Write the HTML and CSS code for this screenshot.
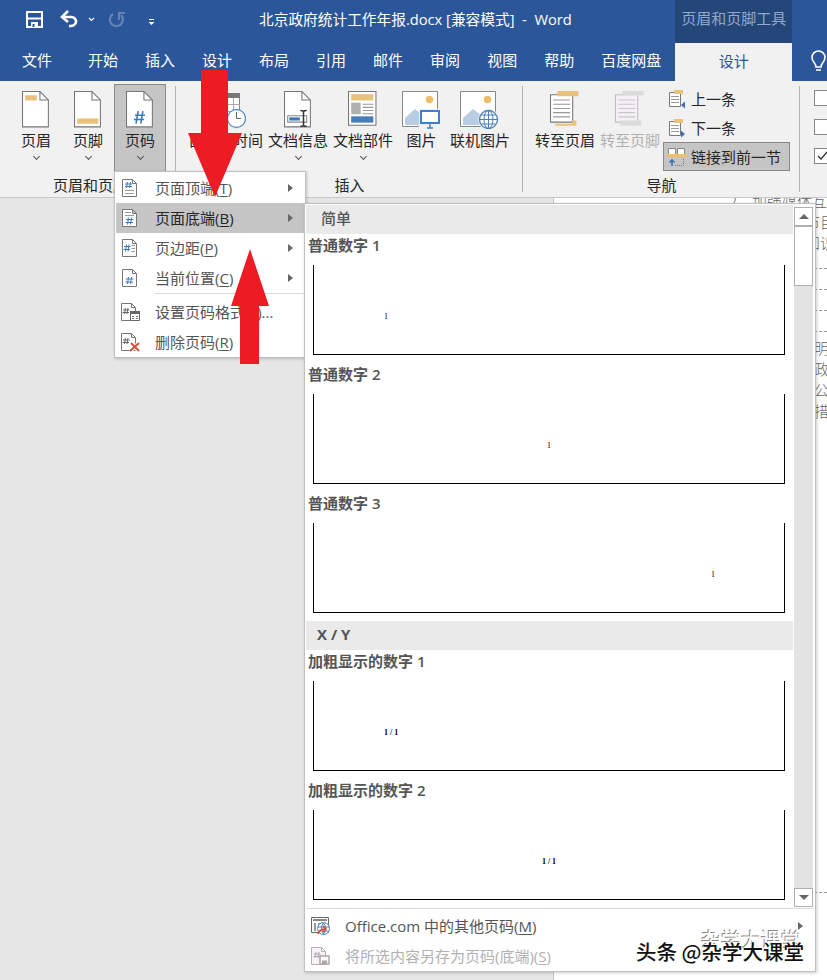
FILE: index.html
```html
<!DOCTYPE html>
<html lang="zh-CN">

<head>
    <meta charset="UTF-8">
    <meta name="viewport" content="width=device-width, initial-scale=1.0">
    <title>北京政府统计工作年报.docx [兼容模式] - Word</title>
    <link rel="stylesheet" href="styles.css">
</head>

<body>
    <header class="top">
        <div class="top-main">
            <div class="titlebar">
                <svg class="quick" width="145" height="24" viewBox="0 0 145 24">
                    <path d="M1 4h15v15H1z" fill="none" stroke="#fff" stroke-width="2" />
                    <path d="M2 10.5h13" stroke="#fff" stroke-width="2" />
                    <path d="M5 14h7v6H5z" fill="#fff" />
                    <path d="M6.500 16h2v3h-2z" fill="#2b579a" />
                    <path d="M36 9h9c7 0 7 10-2 9" fill="none" stroke="#fff" stroke-width="2.600" />
                    <path d="M42 3l-6 6 6 5" fill="none" stroke="#fff" stroke-width="2.600" />
                    <path d="M63 10l2.500 2.500L68 10" fill="none" stroke="#fff" stroke-width="1.200" />
                    <path d="M87 6a6.500 6.500 0 1 0 8 1" fill="none" stroke="#6283b6" stroke-width="2.300" />
                    <path d="M93 12V5h6" fill="none" stroke="#6283b6" stroke-width="2" />
                    <path d="M123 11.500h5" stroke="#fff" />
                    <path d="M122.500 14h6l-3 3z" fill="#fff" />
                </svg>
                <div class="doc-title">北京政府统计工作年报.docx [兼容模式]&nbsp; -&nbsp; Word</div>
            </div>
            <nav class="tabs">
                <span class="file">文件</span>
                <span>开始</span>
                <span>插入</span>
                <span>设计</span>
                <span>布局</span>
                <span>引用</span>
                <span>邮件</span>
                <span>审阅</span>
                <span>视图</span>
                <span>帮助</span>
                <span>百度网盘</span>
            </nav>
        </div>
        <div class="context">
            <div class="context-name">页眉和页脚工具</div>
            <div class="context-tab">设计</div>
        </div>
        <svg class="bulb" width="16" height="24" viewBox="0 0 16 24">
            <path d="M5 17c0-4-4-5-4-9.500a6.500 6.500 0 0 1 13 0C14 12 10 13 10 17zM5 20h5" fill="none" stroke="#fff" stroke-width="1.600" />
        </svg>
    </header>

    <section class="ribbon">
        <div class="group g-header">
            <div class="buttons">
                <div class="btn">
                    <svg width="26" height="36" viewBox="0 0 26 36">
                        <path d="M.5.500h16.500l8 8v25.500H.5z" fill="#fff" stroke="#777" />
                        <path d="M17 .5v8h8" fill="none" stroke="#777" />
                        <path d="M3 4h11v5H3z" fill="#e8c27a" />
                    </svg>
                    <span>页眉</span>
                    <i class="chev"></i>
                </div>
                <div class="btn">
                    <svg width="26" height="36" viewBox="0 0 26 36">
                        <path d="M.5.500h16.500l8 8v25.500H.5z" fill="#fff" stroke="#777" />
                        <path d="M17 .5v8h8" fill="none" stroke="#777" />
                        <path d="M3 26h20v5H3z" fill="#e8c27a" />
                    </svg>
                    <span>页脚</span>
                    <i class="chev"></i>
                </div>
                <div class="btn pressed">
                    <svg width="26" height="36" viewBox="0 0 26 36">
                        <path d="M.5.500h16.500l8 8v25.500H.5z" fill="#fff" stroke="#777" />
                        <path d="M17 .5v8h8" fill="none" stroke="#777" />
                        <path d="M11.500 19L9.500 31M16 19l-2 12M8.500 23h9.500M7.500 27h9.500" fill="none" stroke="#3f78b8" stroke-width="1.500" />
                    </svg>
                    <span>页码</span>
                    <i class="chev"></i>
                </div>
            </div>
            <div class="group-name">页眉和页脚</div>
        </div>

        <div class="group g-insert">
            <div class="buttons">
                <div class="btn w-date">
                    <svg width="40" height="38" viewBox="0 0 40 38">
                        <path d="M3.500 2.500h30v29h-30z" fill="#fff" stroke="#888" />
                        <path d="M3 2h31v5H3z" fill="#777" />
                        <path d="M3 13.500h31M3 20.500h31M10.500 7v24M18.500 7v24M27.500 7v24" stroke="#aaa" />
                        <circle cx="30.500" cy="27.500" r="9" fill="#fff" stroke="#5b8fc9" stroke-width="1.300" />
                        <path d="M30.500 21v6.500h4.500" fill="none" stroke="#666" />
                    </svg>
                    <span>日期和时间</span>
                </div>
                <div class="btn w-four">
                    <svg width="26" height="36" viewBox="0 0 26 36">
                        <path d="M.5.500h16.500l8 8v25.500H.5z" fill="#fff" stroke="#777" />
                        <path d="M17 .5v8h8" fill="none" stroke="#777" />
                        <path d="M3.500 23.500h18v6h-18z" fill="#fff" stroke="#888" />
                        <path d="M5 25h10v3H5z" fill="#3f78b8" />
                        <path d="M18.500 19v14M15.500 18.500q3 0 3 1.500q0-1.500 3-1.500M15.500 33.500q3 0 3-1.500q0 1.500 3 1.500" fill="none" stroke="#333" stroke-width="1.400" />
                    </svg>
                    <span>文档信息</span>
                    <i class="chev"></i>
                </div>
                <div class="btn w-four">
                    <svg width="28" height="36" viewBox="0 0 28 36">
                        <path d="M.5.500h26v32H.5z" fill="#fff" stroke="#777" />
                        <path d="M3 3h21v6H3z" fill="#e8c27a" />
                        <path d="M3 11h9v11H3z" fill="#b0b0b0" />
                        <path d="M14 12.500h10M14 15.500h10M14 18.500h10M14 21.500h10" stroke="#999" />
                        <path d="M3 24h21v6H3z" fill="#4a7ebb" />
                    </svg>
                    <span>文档部件</span>
                    <i class="chev"></i>
                </div>
                <div class="btn w-pic">
                    <svg width="40" height="38" viewBox="0 0 40 38">
                        <path d="M.5.500h35v35H.5z" fill="#fff" stroke="#888" />
                        <path d="M3 34V27l10-9 12 9v7z" fill="#b9cde2" />
                        <circle cx="27.500" cy="8.500" r="3.700" fill="#efbd68" />
                        <path d="M17 18h22v20H17z" fill="#f1f1f1" />
                        <path d="M19 20h18v12H19z" fill="#fff" stroke="#3d80cb" stroke-width="2" />
                        <path d="M28 33v4M25 37h6" stroke="#3d80cb" stroke-width="1.500" />
                    </svg>
                    <span>图片</span>
                </div>
                <div class="btn w-four">
                    <svg width="40" height="38" viewBox="0 0 40 38">
                        <path d="M.5.500h35v35H.5z" fill="#fff" stroke="#888" />
                        <path d="M3 34V27l10-9 12 9v7z" fill="#b9cde2" />
                        <circle cx="27.500" cy="8.500" r="3.700" fill="#efbd68" />
                        <circle cx="28.500" cy="28.500" r="10.500" fill="#f1f1f1" />
                        <circle cx="28.500" cy="28.500" r="9" fill="#fff" stroke="#4c7fb8" stroke-width="1.300" />
                        <ellipse cx="28.500" cy="28.500" rx="4.500" ry="9" fill="none" stroke="#4c7fb8" />
                        <path d="M28.500 19.500v18M19.500 28.500h18M21 24h15M21 33h15" stroke="#4c7fb8" />
                    </svg>
                    <span>联机图片</span>
                </div>
            </div>
            <div class="group-name">插入</div>
        </div>

        <div class="group g-nav">
            <div class="buttons">
                <div class="btn w-four">
                    <svg width="28" height="36" viewBox="0 0 28 36">
                        <path d="M.5 3.500h21v26H.5z" fill="#fff" stroke="#777" />
                        <path d="M3 8.500h16M3 12.500h16M3 16.500h16M3 20.500h16M3 24.500h16" stroke="#999" />
                        <path d="M7 0h20v5H7zM5 31h16v-3h4v5H5z" fill="#e8c27a" />
                    </svg>
                    <span>转至页眉</span>
                </div>
                <div class="btn w-four disabled">
                    <svg width="28" height="36" viewBox="0 0 28 36">
                        <path d="M.5 3.500h21v26H.5z" fill="#f4f0f4" stroke="#c0bcc0" />
                        <path d="M3 8.500h16M3 12.500h16M3 16.500h16M3 20.500h16M3 24.500h16" stroke="#cac6ca" />
                        <path d="M7 0h20v4H7zM5 28h20v5H5z" fill="#dcdadc" />
                    </svg>
                    <span>转至页脚</span>
                </div>
                <div class="stack">
                    <div class="row">
                        <svg width="20" height="20" viewBox="0 0 20 20">
                            <path d="M2.500 3.500h11v14h-11z" fill="#fff" stroke="#777" />
                            <path d="M4 7.500h8M4 10.500h8M4 13.500h8" stroke="#999" />
                            <path d="M7 1h9v4H7z" fill="#e8c27a" />
                            <path d="M14 16l4-3.500v7z" fill="#3d73b5" />
                        </svg>
                        上一条
                    </div>
                    <div class="row">
                        <svg width="20" height="20" viewBox="0 0 20 20">
                            <path d="M2.500 3.500h11v14h-11z" fill="#fff" stroke="#777" />
                            <path d="M4 7.500h8M4 10.500h8M4 13.500h8" stroke="#999" />
                            <path d="M7 1h9v4H7z" fill="#e8c27a" />
                            <path d="M18 16l-4-3.500v7z" fill="#3d73b5" />
                        </svg>
                        下一条
                    </div>
                    <div class="row linked">
                        <svg width="20" height="20" viewBox="0 0 20 20">
                            <path d="M1.500 1.500h7v7h-7zM10.500 1.500h7v7h-7z" fill="#fff" stroke="#888" />
                            <path d="M0 7h20v4H0z" fill="#e8c27a" />
                            <path d="M5 19v-6M2.500 15.500L5 13l2.500 2.500" fill="none" stroke="#3d73b5" stroke-width="1.600" />
                            <path d="M8 18.500h8.500V12" fill="none" stroke="#777" stroke-dasharray="1 1" />
                        </svg>
                        链接到前一节
                    </div>
                </div>
            </div>
            <div class="group-name">导航</div>
        </div>

        <div class="checks">
            <span class="check"></span>
            <span class="check"></span>
            <span class="check">
                <svg width="14" height="14" viewBox="0 0 14 14">
                    <path d="M3 7l3 3 6-7" fill="none" stroke="#333" stroke-width="1.300" />
                </svg>
            </span>
        </div>
    </section>

    <main class="workspace">
        <div class="paper">
            <p class="line l1">2、加强媒体互动</p>
            <p class="line l2">节目</p>
            <p class="line l2">知识</p>
            <p class="dash"></p>
            <p class="dash"></p>
            <p class="dash"></p>
            <p class="dash"></p>
            <p class="line l3">明</p>
            <p class="line l3">政</p>
            <p class="line l3">公</p>
            <p class="line l3">措</p>
            <p class="dash last"></p>
        </div>
    </main>

    <ul class="menu">
        <li>
            <svg width="16" height="20" viewBox="0 0 16 20">
                <path d="M.5 1.500h10l4 4v13H.5zM10.500 1.500v4h4" fill="#fff" stroke="#777" />
                <path d="M5.500 4L4.500 10M8.500 4l-1 6M3 6h7M3 8.500h7" fill="none" stroke="#3f78b8" />
                <path d="M3 12.500h9M3 15.500h9" stroke="#999" />
            </svg>
            <span>页面顶端(<u>T</u>)</span><i class="arrow"></i>
        </li>
        <li class="active">
            <svg width="16" height="20" viewBox="0 0 16 20">
                <path d="M.5 1.500h10l4 4v13H.5zM10.500 1.500v4h4" fill="#fff" stroke="#777" />
                <path d="M3 4.500h6M3 7.500h9" stroke="#999" />
                <path d="M6.500 9.500l-1 7M9.500 9.500l-1 7M4 11.500h7.500M3.500 14.500H11" fill="none" stroke="#3f78b8" />
            </svg>
            <span>页面底端(<u>B</u>)</span><i class="arrow"></i>
        </li>
        <li>
            <svg width="16" height="20" viewBox="0 0 16 20">
                <path d="M.5 1.500h10l4 4v13H.5zM10.500 1.500v4h4" fill="#fff" stroke="#777" />
                <path d="M4.500 6.500l-1 7M7 6.500l-1 7M2 8.500h6.500M1.500 11.500H8" fill="none" stroke="#3f78b8" />
                <path d="M9.500 7.500H13M9.500 10.500H13M9.500 13.500H13" stroke="#999" />
            </svg>
            <span>页边距(<u>P</u>)</span><i class="arrow"></i>
        </li>
        <li>
            <svg width="16" height="20" viewBox="0 0 16 20">
                <path d="M.5 1.500h10l4 4v13H.5zM10.500 1.500v4h4" fill="#fff" stroke="#777" />
                <path d="M6.500 9l-1 7M9.500 9l-1 7M4 11h7.500M3.500 14H11" fill="none" stroke="#3f78b8" />
            </svg>
            <span>当前位置(<u>C</u>)</span><i class="arrow"></i>
        </li>
        <li class="sep"></li>
        <li class="wide">
            <svg width="20" height="20" viewBox="0 0 20 20">
                <path d="M.5 1.500h10l4 4v13H.5zM10.500 1.500v4h4" fill="#fff" stroke="#777" />
                <path d="M4.500 6l-1 6M7 6l-1 6M2 8h6.500M1.500 10.500H8" fill="none" stroke="#666" />
                <path d="M9.500 9.500h9v9h-9z" fill="#fff" stroke="#666" />
                <path d="M9 9h10v3H9z" fill="#666" />
                <path d="M11 14.500h2M15 14.500h2M11 16.500h2M15 16.500h2" stroke="#777" />
            </svg>
            <span>设置页码格式(<u>F</u>)...</span>
        </li>
        <li class="wide">
            <svg width="20" height="20" viewBox="0 0 20 20">
                <path d="M.5 1.500h10l4 4v13H.5zM10.500 1.500v4h4" fill="#fff" stroke="#777" />
                <path d="M4.500 6l-1 6M7 6l-1 6M2 8h6.500M1.500 10.500H8" fill="none" stroke="#666" />
                <path d="M10 11l8 8M18 11l-9 8" stroke="#fff" stroke-width="4" />
                <path d="M10 11l8 8M18 11l-9 8" stroke="#d6513f" stroke-width="2" />
            </svg>
            <span>删除页码(<u>R</u>)</span>
        </li>
    </ul>

    <div class="gallery">
        <div class="gallery-body">
            <div class="list">
                <div class="band">简单</div>
                <div class="item">
                    <h4>普通数字 1</h4>
                    <div class="preview left">1</div>
                </div>
                <div class="item">
                    <h4>普通数字 2</h4>
                    <div class="preview">1</div>
                </div>
                <div class="item">
                    <h4>普通数字 3</h4>
                    <div class="preview right">1</div>
                </div>
                <div class="band xy">X / Y</div>
                <div class="item">
                    <h4>加粗显示的数字 1</h4>
                    <div class="preview left bold">1 / 1</div>
                </div>
                <div class="item">
                    <h4>加粗显示的数字 2</h4>
                    <div class="preview bold">1 / 1</div>
                </div>
            </div>
            <div class="scroll">
                <div class="sb up"></div>
                <div class="thumb"></div>
                <div class="sb down"></div>
            </div>
        </div>
        <div class="gallery-foot">
            <div class="foot-row">
                <svg width="20" height="20" viewBox="0 0 20 20">
                    <path d="M.5 1.500h17v15H.5z" fill="#fff" stroke="#666" />
                    <path d="M2 4h14" stroke="#888" stroke-width="2" />
                    <path d="M3 7h2v8H3zM7 7h3v2H7z" fill="#999" />
                    <circle cx="12.500" cy="12.500" r="6" fill="#fff" stroke="#4c7fb8" />
                    <path d="M7 11h11M7.500 15h10M12.500 7q-4 5 0 11q4-6 0-11" fill="none" stroke="#4c7fb8" />
                    <path d="M7 18c1-4 4-5 7-5M12 10l3 3-3 3" fill="none" stroke="#e04a32" stroke-width="1.700" />
                </svg>
                <span>Office.com 中的其他页码(<u>M</u>)</span>
                <i class="arrow"></i>
            </div>
            <div class="foot-row off">
                <svg width="20" height="20" viewBox="0 0 20 20">
                    <path d="M.5 1.500h10l4 4v13H.5zM10.500 1.500v4h4" fill="#f6f3f6" stroke="#b5b0b5" />
                    <path d="M5 6L4 12M8 6l-1 6M3 8h6.500M2.500 10.500H9" fill="none" stroke="#b0abb0" />
                    <path d="M9 10h9v8H9z" fill="#fff" stroke="#a9a5a9" stroke-width="1.500" />
                    <path d="M11 14.500h5V18h-5z" fill="#a9a5a9" />
                </svg>
                <span>将所选内容另存为页码(底端)(<u>S</u>)</span>
            </div>
        </div>
    </div>

    <svg class="pointer down-arrow" width="54" height="127" viewBox="0 0 54 127">
        <path d="M13 0h27v63h14L27 127 0 63h13z" fill="#ed1c24" />
    </svg>
    <svg class="pointer up-arrow" width="38" height="115" viewBox="0 0 38 115">
        <path d="M19 0l19 57H28v58H9V57H0z" fill="#ed1c24" />
    </svg>

    <div class="ghost">杂学大课堂</div>
    <div class="watermark">头条 @杂学大课堂</div>
</body>

</html>
```
FILE: styles.css
```css
* {
    box-sizing: border-box;
}

body {
    margin: 0;
    width: 827px;
    height: 980px;
    position: relative;
    overflow: hidden;
    background-color: #e6e6e6;
    font-family: "Open Sans", "Noto Sans CJK SC", sans-serif;
    font-size: 15px;
    line-height: 20px;
    color: #262626;
}

svg {
    display: block;
    flex: none;
}

/* title bar and tabs */
.top {
    display: flex;
    height: 81px;
    background-color: #2b579a;
    color: #fff;
}

.top-main {
    width: 678px;
}

.titlebar {
    display: flex;
    align-items: center;
    height: 38px;
    padding-left: 26px;
}

.quick {
    margin-top: 2px;
}

.doc-title {
    margin-left: 88px;
    font-size: 14.7px;
    white-space: nowrap;
}

.tabs {
    display: flex;
    gap: 27px;
    padding: 12px 0 0 22px;
    white-space: nowrap;
}

.file {
    margin-right: 9px;
}

.context {
    width: 117px;
    text-align: center;
}

.context-name {
    height: 43px;
    line-height: 37px;
    background-color: #244678;
    color: #93a9cb;
    white-space: nowrap;
}

.context-tab {
    height: 38px;
    line-height: 36px;
    background-color: #f1f1f1;
    color: #2b579a;
}

.bulb {
    margin: 50px 0 0 19px;
}

/* ribbon */
.ribbon {
    display: flex;
    height: 117px;
    overflow: hidden;
    background-color: #f1f1f1;
    border-bottom: 1px solid #c8c8c8;
}

.group {
    display: flex;
    flex: none;
    flex-direction: column;
    position: relative;
    height: 116px;
}

.group::after {
    content: "";
    position: absolute;
    right: 0;
    top: 5px;
    width: 1px;
    height: 106px;
    background-color: #b4b4b4;
}

.g-header {
    width: 176px;
    padding-left: 10px;
}

.g-insert {
    width: 347px;
    padding-left: 12px;
}

.g-nav {
    width: 277px;
    padding-left: 12px;
}

.buttons {
    display: flex;
    height: 94px;
    padding-top: 3px;
}

.g-insert .buttons,
.g-nav .buttons {
    gap: 5px;
}

.btn {
    display: flex;
    flex-direction: column;
    align-items: center;
    width: 52px;
    height: 88px;
    padding-top: 7px;
    white-space: nowrap;
}

.btn svg {
    height: 38px;
    width: auto;
}

.btn span {
    margin-top: 1px;
}

.pressed {
    padding-top: 6px;
    background-color: #c5c5c5;
    border: 1px solid #888;
}

.w-date {
    width: 75px;
}

.w-four {
    width: 60px;
}

.w-pic {
    width: 47px;
}

.disabled {
    color: #b1b1b1;
}

.chev {
    width: 5px;
    height: 5px;
    margin-top: 4px;
    border: solid #555;
    border-width: 0 1px 1px 0;
    transform: rotate(45deg);
}

.group-name {
    text-align: center;
    margin-left: -5px;
}

.g-insert .group-name,
.g-nav .group-name {
    margin-left: -12px;
}

.stack {
    width: 127px;
    margin-left: -2px;
}

.row {
    display: flex;
    align-items: center;
    gap: 4px;
    height: 29px;
    padding-left: 4px;
    white-space: nowrap;
}

.linked {
    background-color: #c5c5c5;
    border: 1px solid #888;
    padding-left: 3px;
}

.checks {
    display: flex;
    flex-direction: column;
    gap: 13px;
    padding: 9px 0 0 14px;
}

.check {
    width: 16px;
    height: 16px;
    background-color: #fff;
    border: 1px solid #888;
}

/* document behind the menus */
.workspace {
    height: 782px;
    padding-left: 553px;
}

.paper {
    height: 782px;
    overflow: hidden;
    background-color: #fff;
    border-left: 1px solid #c6c6c6;
    color: #666;
    font-family: "Noto Sans CJK SC", sans-serif;
    font-weight: 300;
}

.line {
    height: 21px;
    margin: 0;
    line-height: 21px;
    white-space: nowrap;
}

.l1 {
    margin-top: -8px;
    padding-left: 175px;
}

.l2 {
    padding-left: 251px;
}

.l3 {
    padding-left: 260px;
}

.dash {
    height: 21px;
    margin: 0;
    border-bottom: 1px dashed #999;
}

.dash + .line {
    margin-top: 5px;
}

.dash:nth-child(4) {
    height: 16px;
}

.last {
    height: 472px;
}

/* page number menu */
.menu {
    position: absolute;
    left: 114px;
    top: 171px;
    width: 192px;
    height: 187px;
    margin: 0;
    padding: 1px;
    list-style: none;
    background-color: #fff;
    border: 1px solid #c0c0c0;
    box-shadow: 1px 1px 3px rgba(0, 0, 0, 0.2);
    color: #555;
}

.menu li {
    display: flex;
    align-items: center;
    height: 30px;
    padding: 0 11px 0 6px;
    white-space: nowrap;
}

.menu svg {
    margin-right: 17px;
}

.menu .wide {
    padding-left: 5px;
}

.menu .wide svg {
    margin-right: 14px;
}

.menu .active {
    background-color: #c5c5c5;
    color: #262626;
}

.menu .sep {
    height: 1px;
    margin: 0 0 3px 39px;
    padding: 0;
    background-color: #d8d8d8;
}

.arrow {
    margin-left: auto;
    border-left: 5px solid #666;
    border-top: 4px solid transparent;
    border-bottom: 4px solid transparent;
}

u {
    text-underline-offset: 2px;
    text-decoration-thickness: 1px;
}

/* gallery */
.gallery {
    position: absolute;
    left: 304px;
    top: 203px;
    width: 512px;
    height: 769px;
    padding: 1px;
    background-color: #fff;
    border: 1px solid #c0c0c0;
    box-shadow: 1px 1px 3px rgba(0, 0, 0, 0.2);
    color: #555;
}

.gallery-body {
    display: flex;
    height: 704px;
    border-bottom: 1px solid #dcdcdc;
}

.list {
    width: 487px;
}

.band {
    height: 29px;
    padding-left: 15px;
    line-height: 27px;
    background-color: #eaeaea;
    font-weight: 600;
    font-weight: 500;
}

.xy {
    padding-left: 11px;
    font-weight: 700;
}

.item {
    height: 129px;
    padding: 1px 0 0 2px;
}

.item h4 {
    margin: 0 0 10px;
    font-size: 15px;
    font-weight: 600;
    line-height: 20px;
    font-family: "Open Sans", "Noto Sans CJK SC", sans-serif;
}

.preview {
    width: 472px;
    height: 90px;
    margin-left: 5px;
    padding-top: 43px;
    border: 1px solid #000;
    border-top: none;
    color: #000;
    font-family: "Liberation Serif", serif;
    font-size: 8px;
    line-height: 18px;
    text-align: center;
}

.left {
    padding-left: 70px;
    text-align: left;
}

.right {
    padding-right: 69px;
    text-align: right;
}

.bold {
    font-weight: 700;
}

.scroll {
    display: flex;
    flex-direction: column;
    width: 19px;
    margin: 2px 0 1px 1px;
    background-color: #e3e3e3;
}

.sb {
    display: flex;
    align-items: center;
    justify-content: center;
    height: 19px;
    background-color: #fff;
    border: 1px solid #b0b0b0;
}

.sb::before {
    content: "";
    border: 5px solid transparent;
}

.up::before {
    border-bottom-color: #666;
    border-top: none;
}

.down::before {
    border-top-color: #666;
    border-bottom: none;
}

.thumb {
    height: 60px;
    background-color: #fff;
    border: 1px solid #b0b0b0;
}

.down {
    margin-top: auto;
}

.gallery-foot {
    padding: 2px 11px 0 5px;
}

.foot-row {
    display: flex;
    align-items: center;
    height: 30px;
    white-space: nowrap;
}

.foot-row svg {
    margin-right: 14px;
}

.off {
    color: #b1b1b1;
}

/* red pointers and watermark lie over everything */
.pointer {
    position: absolute;
}

.down-arrow {
    left: 188px;
    top: 70px;
}

.up-arrow {
    left: 231px;
    top: 249px;
}

.ghost,
.watermark {
    position: absolute;
    white-space: nowrap;
    font-family: "Noto Sans CJK SC", sans-serif;
}

.ghost {
    left: 701px;
    top: 930px;
    font-size: 20px;
    color: #fff;
    text-shadow: -1px -1px 0 #888;
}

.watermark {
    left: 636px;
    top: 939px;
    font-size: 20.5px;
    line-height: 24px;
    font-weight: 500;
    color: #111;
    text-shadow: 1px -1px 0 #fff;
}
```
